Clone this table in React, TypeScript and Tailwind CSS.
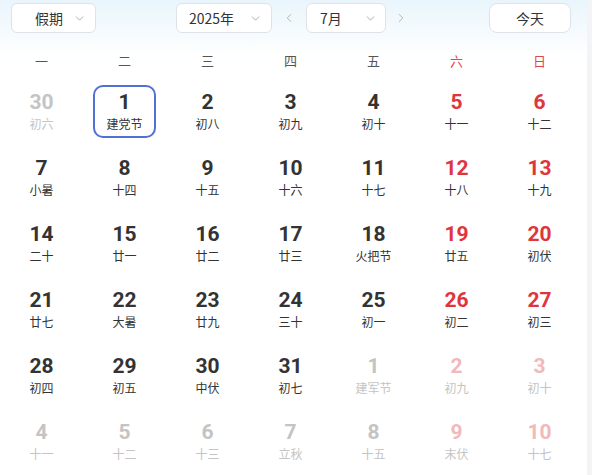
import React from "react";
import { ChevronDown, ChevronLeft, ChevronRight } from "lucide-react";

type Cell = { d: string; l: string; other?: boolean; sel?: boolean };

const rows: Cell[][] = [
  [
    { d: "30", l: "初六", other: true },
    { d: "1", l: "建党节", sel: true },
    { d: "2", l: "初八" },
    { d: "3", l: "初九" },
    { d: "4", l: "初十" },
    { d: "5", l: "十一" },
    { d: "6", l: "十二" },
  ],
  [
    { d: "7", l: "小暑" },
    { d: "8", l: "十四" },
    { d: "9", l: "十五" },
    { d: "10", l: "十六" },
    { d: "11", l: "十七" },
    { d: "12", l: "十八" },
    { d: "13", l: "十九" },
  ],
  [
    { d: "14", l: "二十" },
    { d: "15", l: "廿一" },
    { d: "16", l: "廿二" },
    { d: "17", l: "廿三" },
    { d: "18", l: "火把节" },
    { d: "19", l: "廿五" },
    { d: "20", l: "初伏" },
  ],
  [
    { d: "21", l: "廿七" },
    { d: "22", l: "大暑" },
    { d: "23", l: "廿九" },
    { d: "24", l: "三十" },
    { d: "25", l: "初一" },
    { d: "26", l: "初二" },
    { d: "27", l: "初三" },
  ],
  [
    { d: "28", l: "初四" },
    { d: "29", l: "初五" },
    { d: "30", l: "中伏" },
    { d: "31", l: "初七" },
    { d: "1", l: "建军节", other: true },
    { d: "2", l: "初九", other: true },
    { d: "3", l: "初十", other: true },
  ],
  [
    { d: "4", l: "十一", other: true },
    { d: "5", l: "十二", other: true },
    { d: "6", l: "十三", other: true },
    { d: "7", l: "立秋", other: true },
    { d: "8", l: "十五", other: true },
    { d: "9", l: "末伏", other: true },
    { d: "10", l: "十七", other: true },
  ],
];

const weekdays = ["一", "二", "三", "四", "五", "六", "日"];

const cjk = { fontFamily: '"Noto Sans CJK SC", "Noto Sans", sans-serif' };
const num = { fontFamily: 'Roboto, "Noto Sans", sans-serif' };

function DayCell({ c, col }: { c: Cell; col: number }) {
  const weekend = col >= 5;
  let numColor = "text-[#333333]";
  let lunarColor = "text-[#333333]";
  if (c.other) {
    numColor = weekend ? "text-[#f0b9bb]" : "text-[#c4c4c4]";
    lunarColor = "text-[#c4c4c4]";
  } else if (weekend) {
    numColor = "text-[#e0353d]";
  }
  return (
    <div className="flex items-center justify-center h-[66px]">
      <div
        className={
          "flex flex-col items-center justify-center w-[63px] h-[53px] rounded-[10px] " +
          (c.sel ? "border-2 border-[#5170d4]" : "border-2 border-transparent")
        }
      >
        <div className={"text-[21px] font-bold leading-[25px] " + numColor} style={num}>
          {c.d}
        </div>
        <div className={"text-[12px] leading-[17px] " + lunarColor} style={cjk}>
          {c.l}
        </div>
      </div>
    </div>
  );
}

export default function App() {
  return (
    <div className="flex w-[592px] h-[475px] bg-white overflow-hidden">
      <div className="w-[587px] h-full flex flex-col bg-gradient-to-b from-[#e9f5fc] from-0% via-white via-[12%] to-white">
        <div className="h-[44px] flex items-start pt-[3px] relative" style={cjk}>
          <div className="ml-[11px] w-[85px] h-[30px] rounded-[6px] border border-[#dfe3e8] bg-white flex items-center justify-between pl-[23px] pr-[9px] text-[14px] text-[#333]">
            <span>假期</span>
            <ChevronDown size={13} strokeWidth={1.5} className="text-[#999]" />
          </div>
          <div className="ml-[80px] w-[96px] h-[30px] rounded-[6px] border border-[#dfe3e8] bg-white flex items-center justify-between pl-[12px] pr-[9px] text-[14px] text-[#333]">
            <span>2025年</span>
            <ChevronDown size={13} strokeWidth={1.5} className="text-[#999]" />
          </div>
          <div className="w-[34px] h-[30px] flex items-center justify-center">
            <ChevronLeft size={14} strokeWidth={1.5} className="text-[#aaa]" />
          </div>
          <div className="w-[80px] h-[30px] rounded-[6px] border border-[#dfe3e8] bg-white flex items-center justify-between pl-[13px] pr-[8px] text-[14px] text-[#333]">
            <span>7月</span>
            <ChevronDown size={13} strokeWidth={1.5} className="text-[#999]" />
          </div>
          <div className="w-[30px] h-[30px] flex items-center justify-center">
            <ChevronRight size={14} strokeWidth={1.5} className="text-[#aaa]" />
          </div>
          <div className="ml-[73px] w-[82px] h-[30px] rounded-[8px] border border-[#dfe3e8] bg-white flex items-center justify-center text-[14px] text-[#333]">
            今天
          </div>
        </div>
        <div className="grid grid-cols-7 w-[581px] h-[34px] items-center" style={cjk}>
          {weekdays.map((w, i) => (
            <div
              key={w}
              className={"text-center text-[13px] " + (i >= 5 ? "text-[#e0474d]" : "text-[#555]")}
            >
              {w}
            </div>
          ))}
        </div>
        <div className="grid grid-cols-7 w-[581px]">
          {rows.map((r, ri) =>
            r.map((c, ci) => <DayCell key={ri + "-" + ci} c={c} col={ci} />)
          )}
        </div>
      </div>
      <div className="flex-1 h-full bg-[#f3f4f5]" />
    </div>
  );
}
